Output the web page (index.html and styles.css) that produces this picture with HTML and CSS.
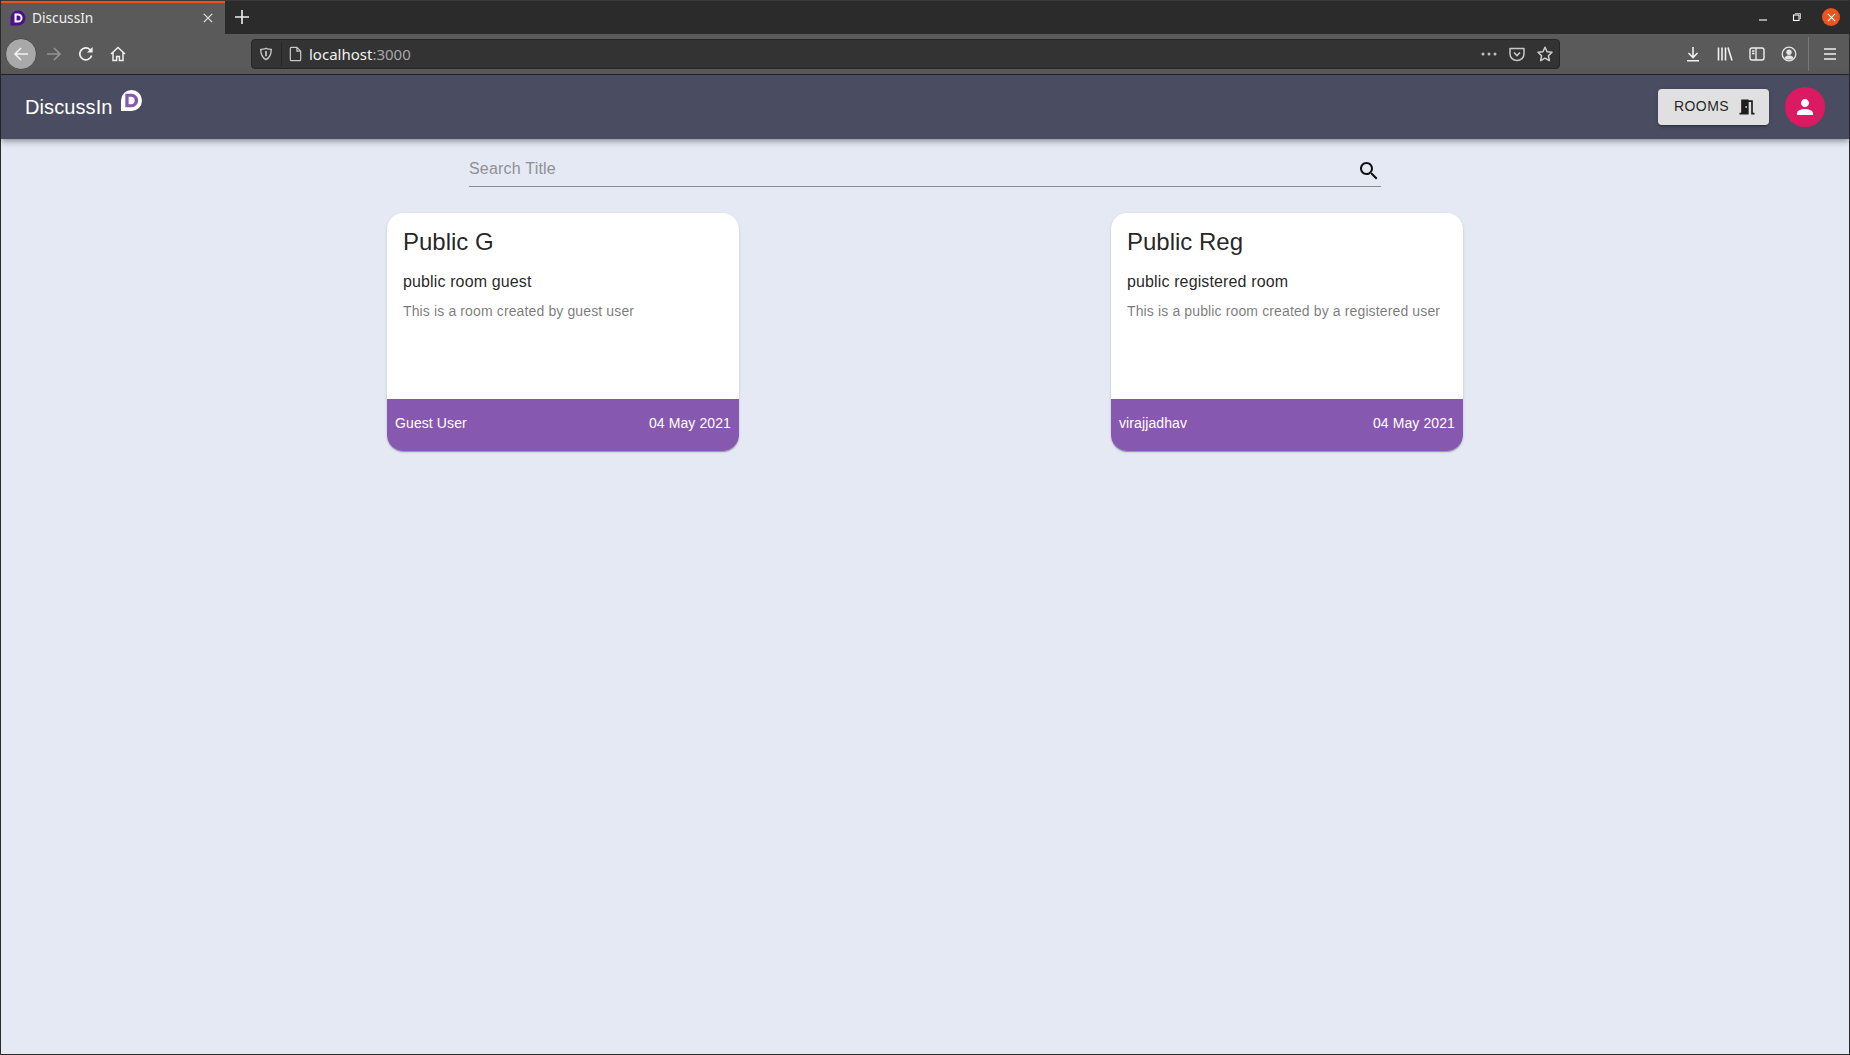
FILE: index.html
```html
<!DOCTYPE html>
<html lang="en">
<head>
    <meta charset="UTF-8">
    <title>DiscussIn</title>
    <link rel="stylesheet" href="styles.css">
</head>
<body>
<div class="window">
    <div class="tabstrip">
        <div class="tab">
            <svg class="favicon" viewBox="0 0 16 16"><path d="M0.500 15.500V8a7.500 7.500 0 1 1 7.500 7.500z" fill="#4b0f8f"/><path d="M4.500 3.500h3.500a4.500 4.500 0 0 1 0 9H4.500zM6.600 5.400v5.200h1.400a2.600 2.600 0 0 0 0-5.200z" fill="#fff"/></svg>
            <span class="tab-title">DiscussIn</span>
            <svg class="tab-close" viewBox="0 0 12 12"><path d="M1 1l10 10M11 1L1 11" stroke="#e4e4e4" stroke-width="1.400"/></svg>
        </div>
        <svg class="new-tab" viewBox="0 0 14 14"><path d="M7 0v14M0 7h14" stroke="#f0f0f0" stroke-width="1.600"/></svg>
        <div class="window-controls">
            <svg class="win-btn" viewBox="0 0 10 10"><path d="M1 8h8" stroke="#eee" stroke-width="1.200"/></svg>
            <svg class="win-btn" viewBox="0 0 10 10"><path d="M3 1.500h5.500V7" fill="none" stroke="#bbb"/><rect x="1.500" y="3" width="5.500" height="5.500" fill="#2b2b2b" stroke="#fff" stroke-width="1.100"/></svg>
            <span class="win-close"><svg viewBox="0 0 10 10"><path d="M1 1l8 8M9 1l-8 8" stroke="#fff" stroke-width="1.300"/></svg></span>
        </div>
    </div>
    <div class="toolbar">
        <span class="back-btn"><svg class="icon-16" viewBox="0 0 16 16"><path d="M15 8H2M8 2L2 8l6 6" fill="none" stroke="#f2f2f2" stroke-width="1.600"/></svg></span>
        <svg class="icon-16 forward" viewBox="0 0 16 16"><path d="M1 8h13M8 2l6 6-6 6" fill="none" stroke="#949494" stroke-width="1.600"/></svg>
        <svg class="icon-16 reload" viewBox="0 0 16 16"><path d="M13.600 9.500A6 6 0 1 1 12 3.600L14 5.500" fill="none" stroke="#f0f0f0" stroke-width="1.700"/><path d="M14.600 1v5.600H9z" fill="#f0f0f0"/></svg>
        <svg class="icon-16 home" viewBox="0 0 16 16"><path d="M1 8l7-6.500L15 8M3 6.500V14.500H6.600V10.500H9.400V14.500H13V6.500" fill="none" stroke="#f0f0f0" stroke-width="1.500"/></svg>
        <div class="urlbar">
            <svg class="shield" viewBox="0 0 16 16"><path d="M8 1.500c2 1 4 1.200 6 1.200 0 5-1 9.500-6 11.800C3 12.200 2 7.700 2 2.700c2 0 4-.2 6-1.200z" fill="none" stroke="#c4c4c4" stroke-width="1.600"/><path d="M7 4.500h2v6H7z" fill="#c4c4c4"/></svg>
            <span class="url-sep"></span>
            <svg class="page-icon" viewBox="0 0 16 16"><path d="M3 1h6.500L13.500 5v9a1 1 0 0 1-1 1h-9a1 1 0 0 1-1-1V2a1 1 0 0 1 1-1zM9.500 1v4h4" fill="none" stroke="#c8c8c8" stroke-width="1.300"/></svg>
            <span class="url-text">localhost<span class="url-port">:3000</span></span>
            <span class="url-actions">
                <svg class="dots" viewBox="0 0 16 4"><circle cx="2" cy="2" r="1.500"/><circle cx="8" cy="2" r="1.500"/><circle cx="14" cy="2" r="1.500"/></svg>
                <svg class="icon-16" viewBox="0 0 16 16"><path d="M1 2.500h14V8a7 6.500 0 0 1-14 0z" fill="none" stroke="#c8c8c8" stroke-width="1.500" stroke-linejoin="round"/><path d="M5 6.500l3 3 3-3" fill="none" stroke="#c8c8c8" stroke-width="1.600"/></svg>
                <svg class="icon-16" viewBox="0 0 16 16"><path d="M8 1.200l2.100 4.500 4.900.6-3.600 3.400.9 4.900L8 12.200l-4.300 2.400.9-4.900L1 6.300l4.900-.6z" fill="none" stroke="#cfcfcf" stroke-width="1.500" stroke-linejoin="round"/></svg>
            </span>
        </div>
        <div class="toolbar-right">
            <svg class="icon-16" viewBox="0 0 16 16"><path d="M8 1v10M3.500 7L8 11.500 12.500 7M2 14.700h12" fill="none" stroke="#f0f0f0" stroke-width="1.600"/></svg>
            <svg class="icon-16" viewBox="0 0 16 16"><path d="M1.500 1.500v13M5 1.500v13M8.500 1.500v13M11 1.500l4 13" fill="none" stroke="#f0f0f0" stroke-width="1.600"/></svg>
            <svg class="icon-16" viewBox="0 0 16 16"><rect x="1" y="2" width="14" height="12" rx="2" fill="none" stroke="#f0f0f0" stroke-width="1.400"/><path d="M7 2v12M3 5h2.500M3 7.500h2.500" stroke="#f0f0f0" stroke-width="1.300"/></svg>
            <svg class="icon-16" viewBox="0 0 16 16"><circle cx="8" cy="8" r="6.800" fill="none" stroke="#e4e4e4" stroke-width="1.300"/><circle cx="8" cy="6.300" r="2.700" fill="#e4e4e4"/><path d="M3.500 12c1-2 2.500-2.500 4.500-2.500s3.500.5 4.500 2.500c-1 1-2.500 1.500-4.500 1.500S4.500 13 3.500 12z" fill="#e4e4e4"/></svg>
            <span class="toolbar-sep"></span>
            <svg class="icon-16" viewBox="0 0 16 16"><path d="M2 3h12M2 8h12M2 13h12" stroke="#f0f0f0" stroke-width="1.700"/></svg>
        </div>
    </div>

    <div class="page">
        <header class="navbar">
            <div class="brand">
                <span class="brand-name">DiscussIn</span>
                <svg class="brand-logo" viewBox="0 0 22 22"><path d="M0 22V11a11 11 0 1 1 11 11z" fill="#fff"/><path d="M4.500 4h6.500a7 7 0 0 1 0 14H4.500zM8 7.200v7.600h2.500a3.800 3.800 0 0 0 0-7.600z" fill="#8658b0"/></svg>
            </div>
            <div class="nav-actions">
                <button class="rooms-btn"><span class="rooms-label">ROOMS</span>
                    <svg class="rooms-icon" viewBox="0 0 24 24"><path d="M14 6v15H3v-2h2V3h9v1h5v15h2v2h-4V6h-3zm-4 5v2h2v-2h-2z"/></svg>
                </button>
                <span class="avatar"><svg viewBox="0 0 24 24"><path d="M12 12c2.210 0 4-1.790 4-4s-1.790-4-4-4-4 1.790-4 4 1.790 4 4 4zm0 2c-2.670 0-8 1.340-8 4v2h16v-2c0-2.660-5.330-4-8-4z"/></svg></span>
            </div>
        </header>

        <div class="search">
            <input class="search-input" type="text" placeholder="Search Title">
            <svg class="search-icon" viewBox="0 0 24 24"><path d="M15.500 14h-.79l-.28-.27C15.410 12.590 16 11.110 16 9.500 16 5.910 13.090 3 9.500 3S3 5.910 3 9.500 5.910 16 9.500 16c1.610 0 3.090-.59 4.230-1.570l.27.28v.79l5 4.990L20.490 19l-4.990-5zm-6 0C7.010 14 5 11.990 5 9.500S7.010 5 9.500 5 14 7.010 14 9.500 11.990 14 9.500 14z"/></svg>
        </div>

        <div class="rooms">
            <div class="card">
                <div class="card-body">
                    <h2>Public G</h2>
                    <p class="card-sub">public room guest</p>
                    <p class="card-desc">This is a room created by guest user</p>
                </div>
                <div class="card-footer"><span>Guest User</span><span>04 May 2021</span></div>
            </div>
            <div class="card">
                <div class="card-body">
                    <h2>Public Reg</h2>
                    <p class="card-sub">public registered room</p>
                    <p class="card-desc">This is a public room created by a registered user</p>
                </div>
                <div class="card-footer"><span>virajjadhav</span><span>04 May 2021</span></div>
            </div>
        </div>
    </div>
</div>
</body>
</html>
```

FILE: styles.css
```css
html, body {
    margin: 0;
    padding: 0;
    height: 100%;
}

body {
    font-family: "Liberation Sans", Arial, sans-serif;
    overflow: hidden;
}

svg {
    display: block;
    flex: none;
}

.window {
    height: 1055px;
    box-sizing: border-box;
    border: 1px solid #2b2b2b;
    border-top: 0;
    display: flex;
    flex-direction: column;
}

/* browser chrome */
.tabstrip {
    height: 34px;
    background-color: #2b2b2b;
    display: flex;
    align-items: center;
    flex: none;
    border-top: 1px solid #3a3a3a;
    box-sizing: border-box;
}

.tab {
    width: 224px;
    height: 33px;
    box-sizing: border-box;
    border-top: 2px solid #e95420;
    background-color: #5a5a5a;
    display: flex;
    align-items: center;
    padding: 0 12px 2px 9px;
    color: #f0f0f0;
    font: 13.700px "Noto Sans", sans-serif;
}

.favicon {
    width: 16px;
    height: 16px;
}

.tab-title {
    margin-left: 6px;
    flex: 1;
}

.tab-close {
    width: 10px;
    height: 10px;
}

.new-tab {
    width: 14px;
    height: 14px;
    margin: 0 0 2px 10px;
}

.window-controls {
    margin-left: auto;
    display: flex;
    align-items: center;
    gap: 24px;
    padding: 0 9px 1px 0;
}

.win-btn {
    width: 10px;
    height: 10px;
}

.win-close {
    width: 18px;
    height: 18px;
    margin-left: -4px;
    border-radius: 50%;
    background-color: #e95420;
    display: flex;
    align-items: center;
    justify-content: center;
}

.win-close svg {
    width: 9px;
    height: 9px;
}

.toolbar {
    height: 41px;
    box-sizing: border-box;
    background-color: #5a5a5a;
    border-bottom: 1px solid #262626;
    display: flex;
    align-items: center;
    padding-left: 4px;
    flex: none;
}

.icon-16 {
    width: 16px;
    height: 16px;
}

.back-btn {
    width: 32px;
    height: 32px;
    border-radius: 50%;
    background-color: #a9a9a9;
    border: 1px solid #4a4a4a;
    box-sizing: border-box;
    display: flex;
    align-items: center;
    justify-content: center;
}

.forward {
    margin-left: 9px;
}

.reload {
    margin-left: 16px;
}

.home {
    margin-left: 16px;
}

.urlbar {
    width: 1309px;
    height: 30px;
    margin-left: 125px;
    box-sizing: border-box;
    background-color: #333;
    border: 1px solid #262626;
    border-radius: 4px;
    display: flex;
    align-items: center;
    padding: 0 6px 0 7px;
}

.shield {
    width: 14px;
    height: 14px;
}

.url-sep {
    width: 1px;
    height: 24px;
    background-color: #262626;
    margin: 0 6px 0 8px;
}

.page-icon {
    width: 15px;
    height: 16px;
}

.url-text {
    margin-left: 6px;
    color: #f2f2f2;
    font: 15px "Noto Sans", sans-serif;
}

.url-port {
    color: #a8a8a8;
}

.url-actions {
    margin-left: auto;
    display: flex;
    align-items: center;
    gap: 12px;
}

.dots {
    width: 16px;
    height: 4px;
    fill: #c0c0c0;
}

.toolbar-right {
    margin-left: auto;
    display: flex;
    align-items: center;
    gap: 16px;
    padding-right: 11px;
}

.toolbar-sep {
    width: 1px;
    height: 34px;
    background-color: #777;
    margin: 0 -3px 0 -5px;
}

/* app */
.page {
    flex: 1;
    background-color: #e5e9f4;
    display: flex;
    flex-direction: column;
    align-items: center;
}

.navbar {
    align-self: stretch;
    height: 64px;
    background-color: #4a4d61;
    box-shadow: 0 2px 4px -1px rgba(0,0,0,0.2), 0 4px 5px 0 rgba(0,0,0,0.14), 0 1px 10px 0 rgba(0,0,0,0.12);
    display: flex;
    align-items: center;
    justify-content: space-between;
    padding: 0 24px;
}

.brand {
    display: flex;
    align-items: flex-start;
    gap: 8px;
    color: #fff;
    font-size: 20px;
    letter-spacing: 0.1px;
}

.brand-logo {
    width: 21px;
    height: 21px;
    margin-top: -6px;
}

.nav-actions {
    display: flex;
    align-items: center;
    gap: 16px;
}

.rooms-btn {
    height: 36px;
    width: 111px;
    padding: 0 12px 0 16px;
    box-sizing: border-box;
    border: 0;
    border-radius: 4px;
    background-color: #e0e0e0;
    color: rgba(0,0,0,0.87);
    font: 14px "Liberation Sans", Arial, sans-serif;
    letter-spacing: 0.03em;
    display: flex;
    align-items: center;
    justify-content: space-between;
    box-shadow: 0 3px 1px -2px rgba(0,0,0,0.2), 0 2px 2px 0 rgba(0,0,0,0.14), 0 1px 5px 0 rgba(0,0,0,0.12);
}

.rooms-label {
    margin-bottom: 2px;
}

.rooms-icon {
    width: 20px;
    height: 20px;
    fill: rgba(0,0,0,0.87);
}

.avatar {
    width: 40px;
    height: 40px;
    border-radius: 50%;
    background-color: #dc1a62;
    display: flex;
    align-items: center;
    justify-content: center;
}

.avatar svg {
    width: 24px;
    height: 24px;
    fill: #fff;
}

.search {
    width: 912px;
    height: 33px;
    margin-top: 15px;
    box-sizing: border-box;
    border-bottom: 1px solid #8b8b95;
    display: flex;
    align-items: center;
}

.search-input {
    flex: 1;
    border: 0;
    padding: 0 0 3px 0;
    background: none;
    outline: none;
    font: 16px "Liberation Sans", Arial, sans-serif;
    letter-spacing: 0.2px;
}

.search-input::placeholder {
    color: #8f9097;
    opacity: 1;
}

.search-icon {
    width: 24px;
    height: 24px;
    margin-top: 2px;
    fill: #111;
}

.rooms {
    width: 1076px;
    margin-top: 26px;
    display: flex;
    justify-content: space-between;
}

.card {
    width: 352px;
    height: 238px;
    border-radius: 16px;
    overflow: hidden;
    background-color: #fff;
    display: flex;
    flex-direction: column;
    box-shadow: 0 2px 1px -1px rgba(0,0,0,0.2), 0 1px 1px 0 rgba(0,0,0,0.14), 0 1px 3px 0 rgba(0,0,0,0.12);
}

.card-body {
    flex: 1;
    padding: 13px 16px;
}

.card-body h2 {
    margin: 0;
    font-size: 24px;
    font-weight: 400;
    line-height: 32px;
    color: rgba(0,0,0,0.87);
}

.card-sub {
    margin: 12px 0 0 0;
    font-size: 16px;
    line-height: 24px;
    letter-spacing: 0.13px;
    color: rgba(0,0,0,0.87);
}

.card-desc {
    margin: 7px 0 0 0;
    font-size: 14px;
    line-height: 20px;
    letter-spacing: 0.13px;
    color: rgba(0,0,0,0.54);
}

.card-footer {
    height: 52px;
    box-sizing: border-box;
    background-color: #8658b0;
    color: #fff;
    font-size: 14px;
    letter-spacing: 0.1px;
    padding: 0 8px 5px 8px;
    display: flex;
    align-items: center;
    justify-content: space-between;
}
```
